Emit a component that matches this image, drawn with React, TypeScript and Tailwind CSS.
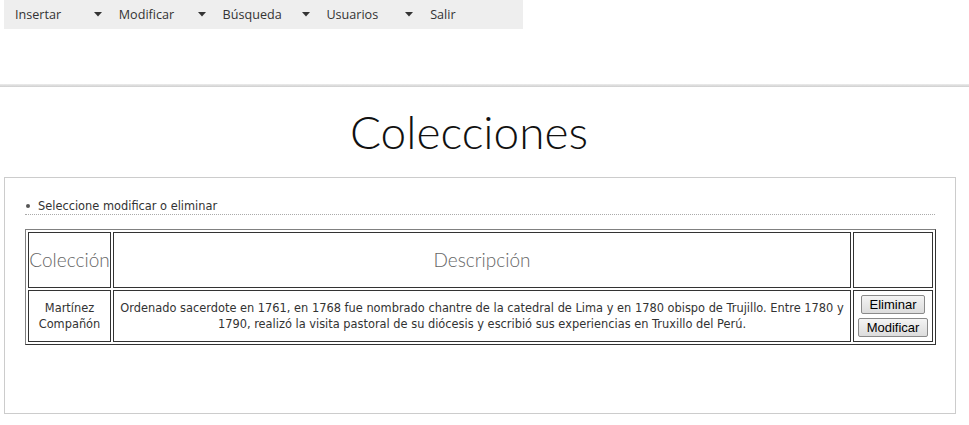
import { useState } from "react";

const menuItems = ["Insertar", "Modificar", "Búsqueda", "Usuarios", "Salir"];

const Arrow = () => (
  <svg width="8" height="5" viewBox="0 0 8 5" className="absolute left-[90px] top-[12px]">
    <polygon points="0,0 8,0 4,4.5" fill="#333" />
  </svg>
);

const MenuBar = () => (
  <div className="ml-[4px] flex h-[29px] w-[519px] bg-[#eeeeee] font-['Open_Sans',sans-serif] text-[12.6px] text-[#333]">
    {menuItems.map((item, i) => (
      <div key={item} className="relative h-full w-[104px] pl-[11px] leading-[29px]">
        {item}
        {i < menuItems.length - 1 && <Arrow />}
      </div>
    ))}
  </div>
);

const Button = ({ label }: { label: string }) => (
  <button className="rounded-[2px] border border-[#8a8a8a] bg-gradient-to-b from-[#f4f4f4] to-[#dcdcdc] px-[8px] py-[1px] font-['Liberation_Sans',Arial,sans-serif] text-[13px] leading-[15px] text-black">
    {label}
  </button>
);

export default function App() {
  const [rows] = useState([
    {
      coleccion: "Martínez Compañón",
      descripcion:
        "Ordenado sacerdote en 1761, en 1768 fue nombrado chantre de la catedral de Lima y en 1780 obispo de Trujillo. Entre 1780 y 1790, realizó la visita pastoral de su diócesis y escribió sus experiencias en Truxillo del Perú.",
    },
  ]);

  return (
    <div className="h-[425px] w-[969px] bg-white">
      <MenuBar />
      <div className="mt-[55px] h-[3px] w-full bg-gradient-to-b from-[#ececec] to-[#cfcfcf]" />
      <h1 className="mt-[14px] pr-[31px] text-center font-['Lato',sans-serif] text-[46px] font-light leading-[62px] text-[#111]">
        Colecciones
      </h1>
      <div className="ml-[4px] mt-[14px] h-[237px] w-[952px] border border-[#cccccc] px-[20px] pt-[21px] font-['DejaVu_Sans',Verdana,sans-serif] text-[11.4px] text-[#333]">
        <div className="flex items-center border-b border-dotted border-[#aaaaaa] pb-[1px] leading-[14px]">
          <span className="ml-[1px] mr-[8px] h-[4px] w-[4px] rounded-full bg-[#555]" />
          Seleccione modificar o eliminar
        </div>
        <table className="mt-[14px] w-[911px] border-separate border-spacing-[2px] border border-[#808080] border-b-[#333] border-r-[#333]">
          <thead>
            <tr className="h-[56px]">
              <th className="w-[83px] border border-[#333] font-['Lato',sans-serif] text-[19px] font-light text-[#666]">
                Colección
              </th>
              <th className="border border-[#333] font-['Lato',sans-serif] text-[19px] font-light text-[#666]">
                Descripción
              </th>
              <th className="w-[80px] border border-[#333]" />
            </tr>
          </thead>
          <tbody>
            {rows.map((row) => (
              <tr key={row.coleccion} className="h-[52px]">
                <td className="border border-[#333] px-[4px] text-center leading-[16px]">
                  {row.coleccion}
                </td>
                <td className="border border-[#333] px-[5px] text-center leading-[16px]">
                  {row.descripcion}
                </td>
                <td className="border border-[#333] text-center">
                  <div className="flex flex-col items-center gap-[4px] py-[2px]">
                    <Button label="Eliminar" />
                    <Button label="Modificar" />
                  </div>
                </td>
              </tr>
            ))}
          </tbody>
        </table>
      </div>
    </div>
  );
}
